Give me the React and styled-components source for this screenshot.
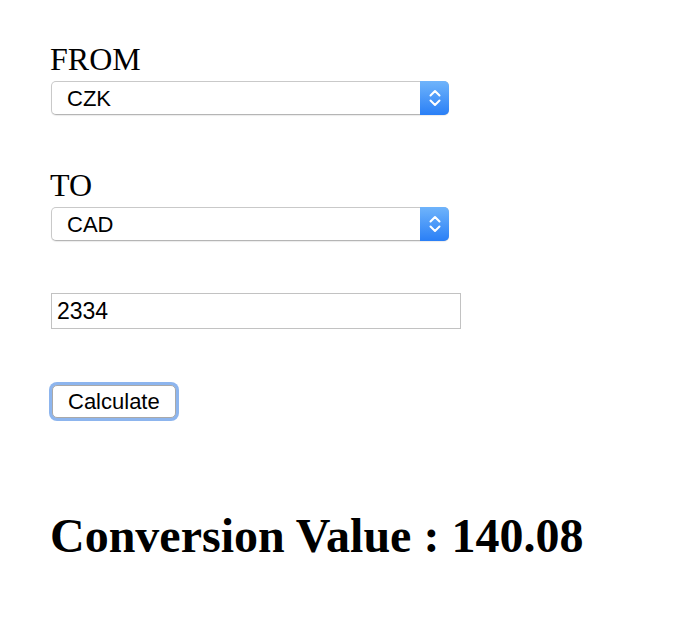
import styled, { createGlobalStyle } from "styled-components";

const Global = createGlobalStyle`
  html, body {
    margin: 0;
    background: #fff;
  }
  body {
    font-family: "Liberation Serif", "Times New Roman", serif;
    color: #000;
  }
`

const Page = styled.div`
  display: flex;
  flex-direction: column;
  align-items: flex-start;
  padding: 41px 0 0 50px;
`

const Field = styled.div`
  display: flex;
  flex-direction: column;
  align-items: flex-start;
  margin-bottom: 52px;
`

const Label = styled.label`
  font-size: 32px;
  line-height: 36px;
  margin-bottom: 4px;
`

const SelectBox = styled.div`
  position: relative;
  width: 398px;
  height: 34px;
  margin-left: 1px;
  box-sizing: border-box;
  border: 1px solid #c9c9c9;
  border-bottom-color: #b5b5b5;
  border-radius: 5px;
  background: #fff;
  box-shadow: 0 1px 1px rgba(0, 0, 0, 0.08);
`

const Select = styled.select`
  appearance: none;
  -webkit-appearance: none;
  width: 100%;
  height: 100%;
  border: none;
  background: transparent;
  padding: 0 0 0 15px;
  font-family: "Liberation Sans", Arial, sans-serif;
  font-size: 22px;
  color: #000;
  outline: none;
`

const Arrows = styled.span`
  position: absolute;
  top: -1px;
  right: -1px;
  bottom: -1px;
  width: 29px;
  border-radius: 0 5px 5px 0;
  background: linear-gradient(#6fb4fb, #2a7ff6);
  display: flex;
  align-items: center;
  justify-content: center;
  pointer-events: none;
`

const NumberInput = styled.input`
  width: 410px;
  height: 36px;
  margin: 0 0 55px 1px;
  box-sizing: border-box;
  border: 1px solid #c2c2c2;
  padding: 0 5px;
  font-family: "Liberation Sans", Arial, sans-serif;
  font-size: 23px;
  color: #000;
  outline: none;
`

const Button = styled.button`
  height: 33px;
  margin: 1px 0 0 2px;
  padding: 0 15px;
  box-sizing: border-box;
  border: 1px solid #a9a9a9;
  border-radius: 5px;
  background: #fff;
  box-shadow: 0 0 0 3px #8db5ee;
  font-family: "Liberation Sans", Arial, sans-serif;
  font-size: 22px;
  color: #000;
`

const Result = styled.h2`
  margin: 90px 0 0;
  font-size: 48px;
  line-height: 56px;
  font-weight: bold;
`

function Chevrons () {
    return (
        <svg width="12" height="20" viewBox="0 0 12 20" fill="none" stroke="#fff" strokeWidth="2" strokeLinecap="round" strokeLinejoin="round">
            <path d="M1.5 7.5 L6 3 L10.5 7.5" />
            <path d="M1.5 12.5 L6 17 L10.5 12.5" />
        </svg>
    )
}

function CurrencySelect ({ value, options }) {
    return (
        <SelectBox>
            <Select defaultValue={value}>
                {options.map(o => <option key={o}>{o}</option>)}
            </Select>
            <Arrows><Chevrons /></Arrows>
        </SelectBox>
    )
}

const currencies = ["CZK", "CAD", "USD", "EUR", "GBP"]

function App () {
    return (
        <Page>
            <Global />
            <Field>
                <Label>FROM</Label>
                <CurrencySelect value="CZK" options={currencies} />
            </Field>
            <Field>
                <Label>TO</Label>
                <CurrencySelect value="CAD" options={currencies} />
            </Field>
            <NumberInput type="text" defaultValue="2334" />
            <Button>Calculate</Button>
            <Result>Conversion Value : 140.08</Result>
        </Page>
    )
}

export default App
